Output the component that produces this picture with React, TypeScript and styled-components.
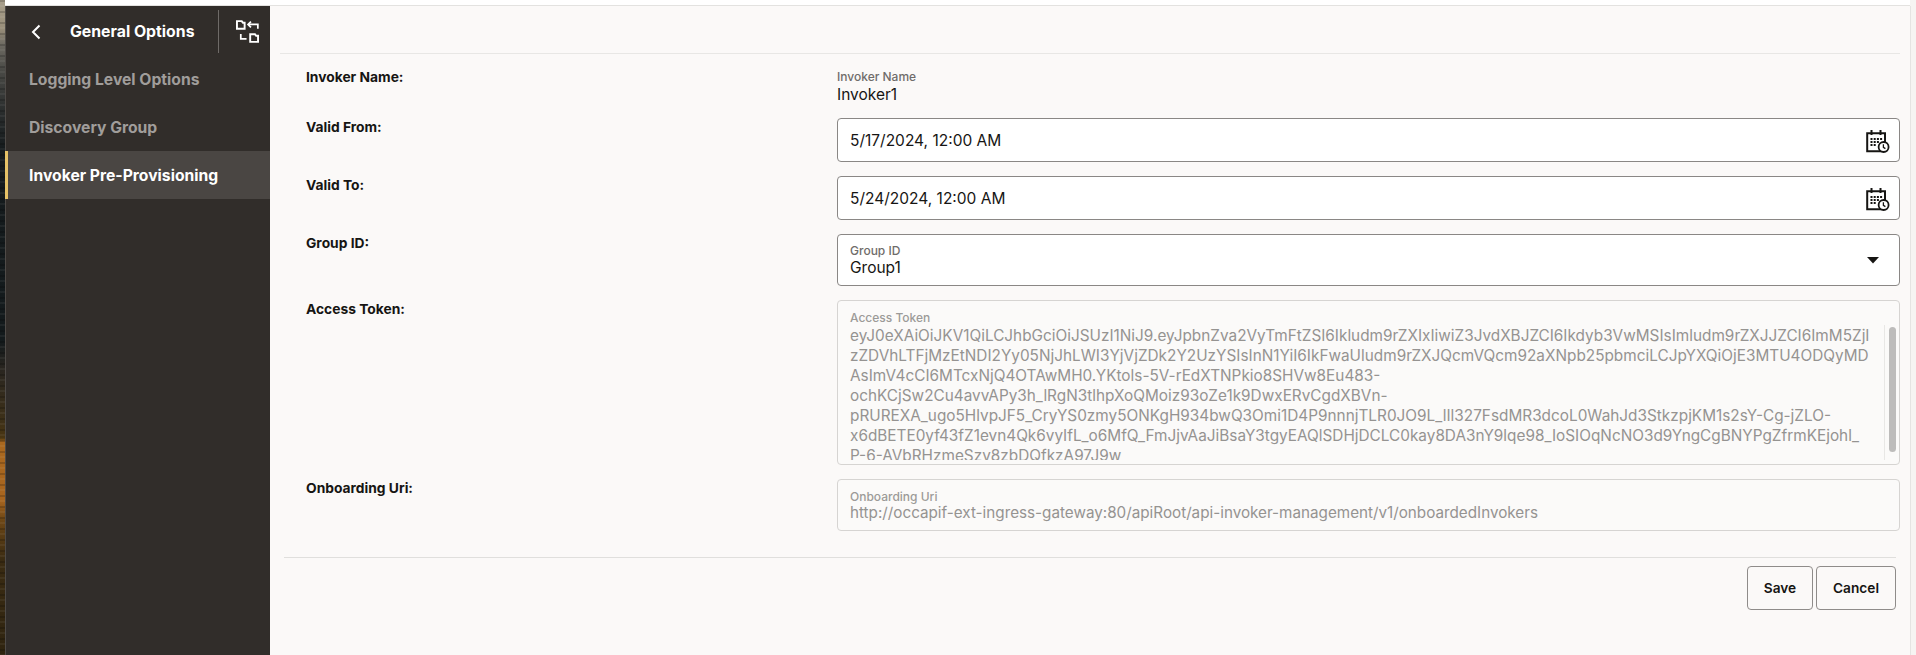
import React from 'react';
import styled, { createGlobalStyle } from 'styled-components';

const GlobalStyle = createGlobalStyle`
    html, body {
        margin: 0;
        padding: 0;
        width: 100%;
        height: 655px;
        overflow: hidden;
        background: #f6f4f2;
        font-family: Inter, "Liberation Sans", sans-serif;
        color: #161513;
    }
    * { box-sizing: border-box; }
`;

const Page = styled.div`
    display: flex;
    width: 1916px;
    height: 655px;
`;

// desktop wallpaper peeking out on the left
const Wallpaper = styled.div`
    width: 5px;
    flex-shrink: 0;
    background:
        repeating-linear-gradient(to bottom, rgba(0, 0, 0, 0.18) 0 2px, transparent 2px 5px, rgba(255, 255, 255, 0.05) 5px 7px, transparent 7px 11px),
        linear-gradient(
            to bottom,
            #a89f8c 0, #9a8f7a 28px, #6d6a62 45px, #4a4a46 70px, #2b2e2e 110px, #151b1d 150px,
            #131a1c 340px, #2a2620 370px, #3d3018 420px, #4a3612 438px, #a9681f 442px,
            #a8651f 500px, #6d4716 520px, #3a2b12 560px, #2f2410 655px
        );
`;

const Window = styled.div`
    flex: 1;
    display: flex;
    flex-direction: column;
    min-width: 0;
`;

const TitleStrip = styled.div`
    height: 6px;
    flex-shrink: 0;
    background: #ffffff;
    border-bottom: 1px solid #e3e2e0;
    margin-right: 6px;
`;

const Body = styled.div`
    flex: 1;
    display: flex;
    min-height: 0;
`;

const Sidebar = styled.aside`
    width: 265px;
    flex-shrink: 0;
    background: #312d2a;
    border-left: 1px solid #4f4b48;
    display: flex;
    flex-direction: column;
`;

const SideHeader = styled.div`
    height: 49px;
    padding: 2px 0 0 24px;
    display: flex;
    align-items: center;
    color: #ffffff;
`;

const BackIcon = styled.svg`
    width: 12px;
    height: 18px;
    flex-shrink: 0;
`;

const SideTitle = styled.h1`
    margin: 0 0 0 28px;
    width: 124px;
    font-size: 15.8px;
    line-height: 20px;
    font-weight: 700;
    white-space: nowrap;
`;

const HeaderRule = styled.div`
    width: 1px;
    height: 43px;
    margin-left: 24px;
    background: #6f6b68;
`;

const SwapIcon = styled.svg`
    width: 23px;
    height: 23px;
    margin-left: 17px;
    flex-shrink: 0;
`;

const NavItem = styled.div<{ $active?: boolean }>`
    height: 48px;
    display: flex;
    align-items: center;
    margin-left: ${(props) => (props.$active ? '-1px' : '0')};
    padding-left: ${(props) => (props.$active ? '21px' : '23px')};
    font-size: 15.7px;
    font-weight: 700;
    white-space: nowrap;
    color: ${(props) => (props.$active ? '#ffffff' : '#a09d9b')};
    background: ${(props) => (props.$active ? '#4a4643' : 'transparent')};
    border-left: ${(props) => (props.$active ? '3px solid #e6c267' : 'none')};
`;

const Main = styled.main`
    flex: 1;
    display: flex;
    flex-direction: column;
    background: #fbf9f8;
    border-right: 1px solid #e5e4e2;
    margin-right: 5px;
    padding: 0 10px 0 10px;
    min-width: 0;
`;

const TopRule = styled.div`
    height: 48px;
    flex-shrink: 0;
    border-bottom: 1px solid #e8e7e5;
`;

const Form = styled.form`
    display: grid;
    grid-template-columns: 557px 1fr;
    row-gap: 14px;
    padding: 14px 0 0 0;
`;

const RowLabel = styled.div`
    padding-left: 26px;
    font-size: 13.8px;
    line-height: 18px;
    font-weight: 700;
    color: #161513;
`;

const ReadOnly = styled.div`
    height: 36px;
    padding-top: 1px;
`;

const SmallLabel = styled.div<{ $disabled?: boolean }>`
    font-size: 12px;
    line-height: 15px;
    font-weight: 500;
    color: ${(props) => (props.$disabled ? '#9c9a98' : '#6f6c6a')};
`;

const ReadValue = styled.div`
    font-size: 15.5px;
    line-height: 20px;
    margin-top: 1px;
`;

const InputBox = styled.div<{ $height: number; $disabled?: boolean }>`
    height: ${(props) => props.$height}px;
    display: flex;
    align-items: center;
    justify-content: space-between;
    padding: 0 9px 0 12px;
    border-radius: 4px;
    border: 1px solid ${(props) => (props.$disabled ? '#d6d4d2' : '#8a8785')};
    background: ${(props) => (props.$disabled ? '#fbfaf9' : '#ffffff')};
`;

const DateBox = styled(InputBox)`
    padding-top: 2px;
`;

const UriBox = styled(InputBox)`
    padding-top: 1px;
`;

const InputText = styled.span`
    font-size: 15.5px;
    line-height: 20px;
    color: #161513;
`;

const Stack = styled.div`
    display: flex;
    flex-direction: column;
`;

const GroupValue = styled.span`
    font-size: 15.5px;
    line-height: 20px;
    color: #161513;
`;

const CaretIcon = styled.svg`
    width: 14px;
    height: 8px;
    margin-right: 10px;
`;

const TokenBox = styled.div`
    height: 165px;
    position: relative;
    overflow: hidden;
    padding: 9px 0 0 12px;
    border-radius: 4px;
    border: 1px solid #d6d4d2;
    background: #fbfaf9;
`;

const TokenText = styled.div`
    margin-top: 1px;
    height: 134px;
    overflow: hidden;
    font-size: 15.35px;
    line-height: 20px;
    color: #959391;
    white-space: pre;
`;

const ScrollTrack = styled.div`
    position: absolute;
    top: 24px;
    right: 0;
    bottom: 4px;
    width: 15px;
    border-left: 1px solid #e8e7e5;
`;

const ScrollThumb = styled.div`
    position: absolute;
    top: 2px;
    left: 4px;
    width: 7px;
    height: 125px;
    border-radius: 4px;
    background: #bdbcbb;
`;

const UriValue = styled.span`
    font-size: 15.24px;
    line-height: 18px;
    color: #959391;
`;

const Footer = styled.div`
    margin: 26px 4px 0 4px;
    border-top: 1px solid #e0dfdd;
    padding-top: 8px;
    display: flex;
    justify-content: flex-end;
    gap: 3px;
`;

const Button = styled.button<{ $width: number }>`
    width: ${(props) => props.$width}px;
    height: 44px;
    border: 1px solid #8f8c8a;
    border-radius: 4px;
    background: #fbf9f8;
    font-family: inherit;
    font-size: 13.7px;
    font-weight: 600;
    color: #161513;
    padding: 0;
`;

const tokenLines = [
    'eyJ0eXAiOiJKV1QiLCJhbGciOiJSUzI1NiJ9.eyJpbnZva2VyTmFtZSI6Ikludm9rZXIxIiwiZ3JvdXBJZCI6Ikdyb3VwMSIsImludm9rZXJJZCI6ImM5ZjI',
    'zZDVhLTFjMzEtNDI2Yy05NjJhLWI3YjVjZDk2Y2UzYSIsInN1YiI6IkFwaUludm9rZXJQcmVQcm92aXNpb25pbmciLCJpYXQiOjE3MTU4ODQyMD',
    'AsImV4cCI6MTcxNjQ4OTAwMH0.YKtols-5V-rEdXTNPkio8SHVw8Eu483-',
    'ochKCjSw2Cu4avvAPy3h_lRgN3tlhpXoQMoiz93oZe1k9DwxERvCgdXBVn-',
    'pRUREXA_ugo5HlvpJF5_CryYS0zmy5ONKgH934bwQ3Omi1D4P9nnnjTLR0JO9L_lIl327FsdMR3dcoL0WahJd3StkzpjKM1s2sY-Cg-jZLO-',
    'x6dBETE0yf43fZ1evn4Qk6vyIfL_o6MfQ_FmJjvAaJiBsaY3tgyEAQlSDHjDCLC0kay8DA3nY9lqe98_IoSIOqNcNO3d9YngCgBNYPgZfrmKEjohl_',
    'P-6-AVbRHzmeSzv8zbDQfkzA97J9w',
];

const CalendarClock = () => (
    <svg width="24" height="24" viewBox="0 0 24 24" fill="none">
        <path d="M19 18.6V4.2H1.2v18h14" stroke="#161513" strokeWidth="2" />
        <path d="M5.5 1v5M14.5 1v5" stroke="#161513" strokeWidth="2" />
        <path
            d="M4.5 9h2v2h-2zM7.7 9h2v2h-2zM10.9 9h2v2h-2zM14.1 9h2v2h-2zM4.5 12h2v2h-2zM7.7 12h2v2h-2zM10.9 12h2v2h-2zM4.5 15h2v2h-2zM7.7 15h2v2h-2z"
            fill="#161513"
        />
        <circle cx="17.6" cy="18" r="5" fill="#ffffff" stroke="#161513" strokeWidth="1.8" />
        <path d="M17.4 15.2v3.1l2 1.3" stroke="#161513" strokeWidth="1.3" />
    </svg>
);

const App = () => {
    return (
        <Page>
            <GlobalStyle />
            <Wallpaper />
            <Window>
                <TitleStrip />
                <Body>
                    <Sidebar>
                        <SideHeader>
                            <BackIcon viewBox="0 0 12 18" fill="none">
                                <path d="M9.5 2.5L3 9l6.5 6.5" stroke="#ffffff" strokeWidth="2" />
                            </BackIcon>
                            <SideTitle>General Options</SideTitle>
                            <HeaderRule />
                            <SwapIcon viewBox="0 0 24 24" fill="none">
                                <path d="M1 1.2h5l1.2 1.6H9v6.4H1z" stroke="#ffffff" strokeWidth="2" />
                                <path d="M14.8 14.8h5l1.2 1.6h2v6.4h-8.2z" stroke="#ffffff" strokeWidth="2" />
                                <path d="M22.8 9V4.6H13" stroke="#ffffff" strokeWidth="1.8" />
                                <path d="M15.6 1.6l-3 3 3 3" stroke="#ffffff" strokeWidth="1.8" />
                                <path d="M5 14.6v5h6" stroke="#ffffff" strokeWidth="1.8" />
                            </SwapIcon>
                        </SideHeader>
                        <NavItem>Logging Level Options</NavItem>
                        <NavItem>Discovery Group</NavItem>
                        <NavItem $active>Invoker Pre-Provisioning</NavItem>
                    </Sidebar>
                    <Main>
                        <TopRule />
                        <Form>
                            <RowLabel>Invoker Name:</RowLabel>
                            <ReadOnly>
                                <SmallLabel>Invoker Name</SmallLabel>
                                <ReadValue>Invoker1</ReadValue>
                            </ReadOnly>

                            <RowLabel>Valid From:</RowLabel>
                            <DateBox $height={44}>
                                <InputText>5/17/2024, 12:00 AM</InputText>
                                <CalendarClock />
                            </DateBox>

                            <RowLabel>Valid To:</RowLabel>
                            <DateBox $height={44}>
                                <InputText>5/24/2024, 12:00 AM</InputText>
                                <CalendarClock />
                            </DateBox>

                            <RowLabel>Group ID:</RowLabel>
                            <InputBox $height={52}>
                                <Stack>
                                    <SmallLabel>Group ID</SmallLabel>
                                    <GroupValue>Group1</GroupValue>
                                </Stack>
                                <CaretIcon viewBox="0 0 14 8">
                                    <path d="M1 1h12L7 7.5z" fill="#161513" />
                                </CaretIcon>
                            </InputBox>

                            <RowLabel>Access Token:</RowLabel>
                            <TokenBox>
                                <SmallLabel $disabled>Access Token</SmallLabel>
                                <TokenText>
                                    {tokenLines.map((line) => (
                                        <div key={line}>{line}</div>
                                    ))}
                                </TokenText>
                                <ScrollTrack>
                                    <ScrollThumb />
                                </ScrollTrack>
                            </TokenBox>

                            <RowLabel>Onboarding Uri:</RowLabel>
                            <UriBox $height={52} $disabled>
                                <Stack>
                                    <SmallLabel $disabled>Onboarding Uri</SmallLabel>
                                    <UriValue>http://occapif-ext-ingress-gateway:80/apiRoot/api-invoker-management/v1/onboardedInvokers</UriValue>
                                </Stack>
                            </UriBox>
                        </Form>
                        <Footer>
                            <Button type="button" $width={66}>Save</Button>
                            <Button type="button" $width={80}>Cancel</Button>
                        </Footer>
                    </Main>
                </Body>
            </Window>
        </Page>
    );
};

export default App;
